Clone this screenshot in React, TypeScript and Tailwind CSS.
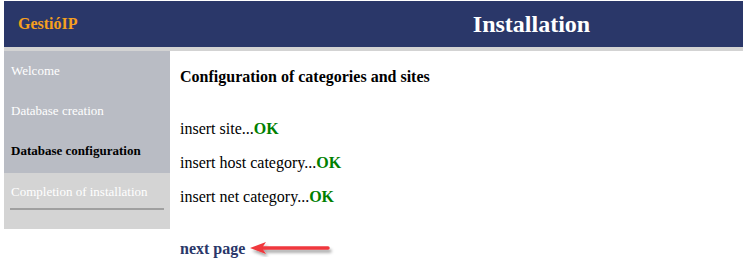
export default function App() {
  const serif = { fontFamily: '"Liberation Serif", "Times New Roman", serif' };
  const steps = [
    { label: "Welcome", done: true },
    { label: "Database creation", done: true },
    { label: "Database configuration", current: true },
  ];

  return (
    <div className="h-[267px] w-[743px] overflow-hidden bg-white pl-[4px] pt-[1px]" style={serif}>
      <div className="flex h-[46px] items-center bg-[#2a3769]">
        <div className="w-[166px] pl-[14px] text-[16px] font-bold text-[#f5a01e]">GestióIP</div>
        <div className="flex-1 pl-[150px] text-center text-[24px] font-bold text-white">Installation</div>
      </div>
      <div className="h-[4px] bg-[#d3d3d3]" />

      <div className="flex">
        <div className="w-[166px]">
          <div className="bg-[#b9bcc4] pb-[2px]">
            {steps.map((s) => (
              <div
                key={s.label}
                className={`flex h-[40px] items-center px-[7px] text-[13px] ${
                  s.current ? "font-bold text-black" : "text-white"
                }`}
              >
                {s.label}
              </div>
            ))}
          </div>
          <div className="h-[56px] bg-[#d4d4d4] px-[6px] pt-[9px]">
            <div className="pl-[1px] text-[13px] text-white">Completion of installation</div>
            <div className="mt-[6px] h-[2px] bg-[#a0a0a0]" />
          </div>
        </div>

        <div className="flex-1 pl-[10px]">
          <div className="pt-[14px] text-[16px] font-bold text-black">Configuration of categories and sites</div>
          <div className="mt-[28px] flex flex-col gap-[10px] text-[16px] text-black">
            <div>
              insert site...<span className="font-bold text-[#008000]">OK</span>
            </div>
            <div>
              insert host category...<span className="font-bold text-[#008000]">OK</span>
            </div>
            <div>
              insert net category...<span className="font-bold text-[#008000]">OK</span>
            </div>
          </div>
          <div className="mt-[28px] flex items-center">
            <span className="text-[16px] font-bold text-[#2a3769]">next page</span>
            <svg width="88" height="16" viewBox="0 0 88 16" className="ml-[3px]">
              <defs>
                <filter id="sh" x="-10%" y="-50%" width="130%" height="200%">
                  <feDropShadow dx="2" dy="3" stdDeviation="1.5" floodColor="#000" floodOpacity="0.35" />
                </filter>
              </defs>
              <g filter="url(#sh)">
                <line x1="14" y1="7" x2="80" y2="7" stroke="#f0373c" strokeWidth="3.5" strokeLinecap="round" />
                <polygon points="2,7 18,1 14,7 18,13" fill="#f0373c" />
              </g>
            </svg>
          </div>
        </div>
      </div>
    </div>
  );
}
